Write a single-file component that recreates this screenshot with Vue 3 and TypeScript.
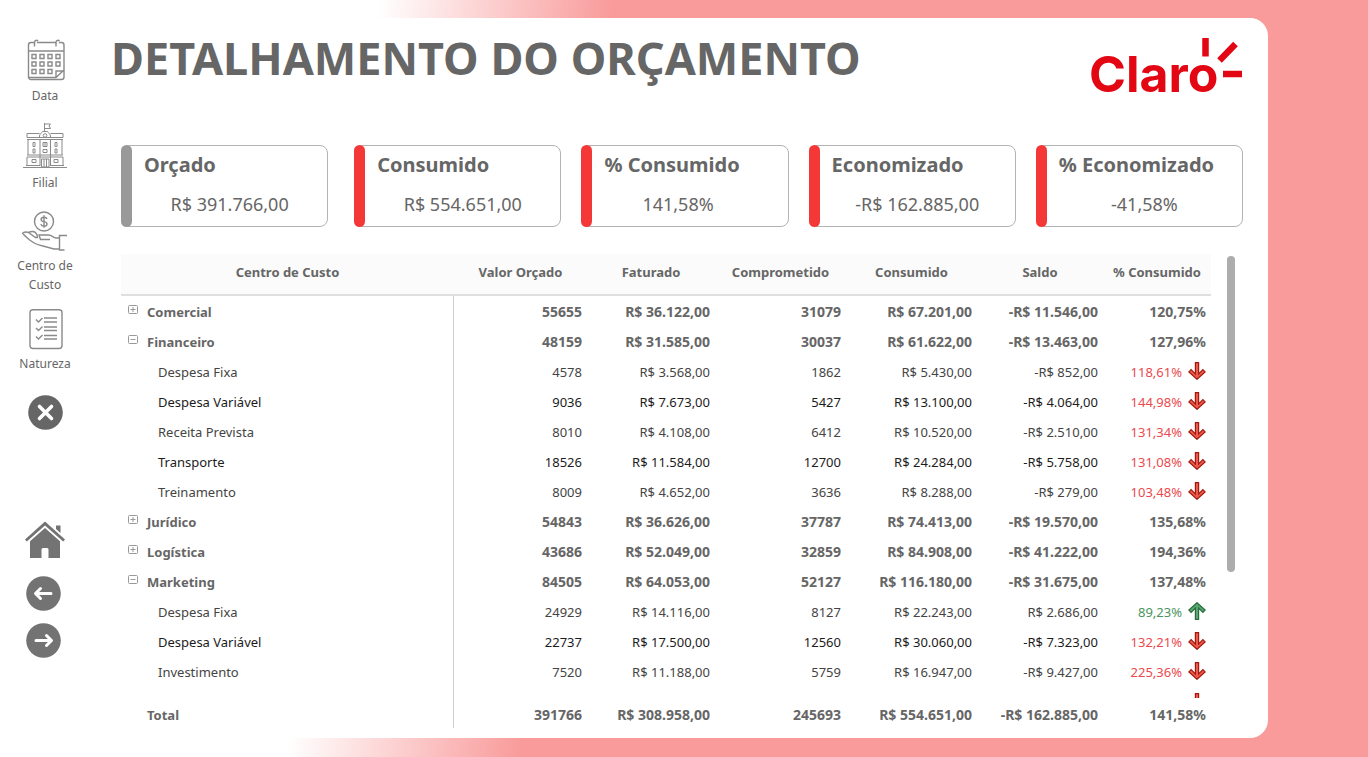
<script setup lang="ts">
interface Card {
  title: string
  value: string
  tone: 'grey' | 'red'
  percent?: boolean
}

interface Row {
  name: string
  group?: 'open' | 'closed'
  alt?: boolean
  cells: string[]
  percent: string
  trend?: 'up' | 'down'
}

const budget: Card = { title: 'Orçado', value: 'R$ 391.766,00', tone: 'grey' }

const cards: Card[] = [
  { title: 'Consumido', value: 'R$ 554.651,00', tone: 'red' },
  { title: '% Consumido', value: '141,58%', tone: 'red', percent: true },
  { title: 'Economizado', value: '-R$ 162.885,00', tone: 'red' },
  { title: '% Economizado', value: '-41,58%', tone: 'red' },
]

const columns: string[] = ['Centro de Custo', 'Valor Orçado', 'Faturado', 'Comprometido', 'Consumido', 'Saldo', '% Consumido']

const rows: Row[] = [
  { name: 'Comercial', group: 'closed', cells: ['55655', 'R$ 36.122,00', '31079', 'R$ 67.201,00', '-R$ 11.546,00'], percent: '120,75%' },
  { name: 'Financeiro', group: 'open', cells: ['48159', 'R$ 31.585,00', '30037', 'R$ 61.622,00', '-R$ 13.463,00'], percent: '127,96%' },
  { name: 'Despesa Fixa', cells: ['4578', 'R$ 3.568,00', '1862', 'R$ 5.430,00', '-R$ 852,00'], percent: '118,61%', trend: 'down' },
  { name: 'Despesa Variável', alt: true, cells: ['9036', 'R$ 7.673,00', '5427', 'R$ 13.100,00', '-R$ 4.064,00'], percent: '144,98%', trend: 'down' },
  { name: 'Receita Prevista', cells: ['8010', 'R$ 4.108,00', '6412', 'R$ 10.520,00', '-R$ 2.510,00'], percent: '131,34%', trend: 'down' },
  { name: 'Transporte', alt: true, cells: ['18526', 'R$ 11.584,00', '12700', 'R$ 24.284,00', '-R$ 5.758,00'], percent: '131,08%', trend: 'down' },
  { name: 'Treinamento', cells: ['8009', 'R$ 4.652,00', '3636', 'R$ 8.288,00', '-R$ 279,00'], percent: '103,48%', trend: 'down' },
  { name: 'Jurídico', group: 'closed', cells: ['54843', 'R$ 36.626,00', '37787', 'R$ 74.413,00', '-R$ 19.570,00'], percent: '135,68%' },
  { name: 'Logística', group: 'closed', cells: ['43686', 'R$ 52.049,00', '32859', 'R$ 84.908,00', '-R$ 41.222,00'], percent: '194,36%' },
  { name: 'Marketing', group: 'open', cells: ['84505', 'R$ 64.053,00', '52127', 'R$ 116.180,00', '-R$ 31.675,00'], percent: '137,48%' },
  { name: 'Despesa Fixa', cells: ['24929', 'R$ 14.116,00', '8127', 'R$ 22.243,00', 'R$ 2.686,00'], percent: '89,23%', trend: 'up' },
  { name: 'Despesa Variável', alt: true, cells: ['22737', 'R$ 17.500,00', '12560', 'R$ 30.060,00', '-R$ 7.323,00'], percent: '132,21%', trend: 'down' },
  { name: 'Investimento', cells: ['7520', 'R$ 11.188,00', '5759', 'R$ 16.947,00', '-R$ 9.427,00'], percent: '225,36%', trend: 'down' },
  { name: '', cells: ['', '', '', '', ''], percent: '', trend: 'down' },
]

const totals: string[] = ['391766', 'R$ 308.958,00', '245693', 'R$ 554.651,00', '-R$ 162.885,00', '141,58%']
</script>

<template>
  <div class="page">
    <nav class="side">
      <button class="filter" type="button">
        <svg width="44" height="44" viewBox="-4 0 44 44" class="line">
          <rect x="1.5" y="4.500" width="35.500" height="37" rx="2.500" />
          <path d="M1.500 13h35.500M2 39.500h27l8-7.500M29 39.500v-6.500h8" />
          <path class="gap" d="M7 4.500h3M29 4.500h3" />
          <path d="M7.500 8.500V4a2 2 0 0 1 3.500-1M29 8.500V4a2 2 0 0 1 3.500-1" />
          <path d="M5 16.500h4v4h-4zM13 16.500h4v4h-4zM21 16.500h4v4h-4zM29 16.500h4v4h-4zM5 24h4v4h-4zM13 24h4v4h-4zM21 24h4v4h-4zM29 24h4v4h-4zM5 31.500h4v4h-4zM13 31.500h4v4h-4zM21 31.500h4v4h-4z" />
        </svg>
        <span>Data</span>
      </button>
      <button class="filter" type="button">
        <svg width="46" height="50" viewBox="0 0 46 50" class="line thin">
          <path d="M22.500 12V4M22.500 5h6l-1.500 2 1.500 2.500h-6" />
          <path d="M17.500 17c0-1.500 2-3 3-4.500h5c1 1.500 3 3 3 4.500v2M17.500 19v-2" />
          <circle cx="23" cy="16.500" r="1.800" />
          <path d="M5 18.500v-4h12.500M28.500 14.500H41v4M5 18.500h36M5 20.500h36M6 20.500V36M40 20.500V36M18 20.500V47M28.500 20.500V47M5 36h36M5 38h36M5 38v9M41 38v9M1 48.500h44M4 46.500h14M28.500 46.500H42" />
          <path d="M11 23.500h2v4h-2zM11 30h2v4h-2zM33 23.500h2v4h-2zM33 30h2v4h-2zM21 23.500h4v4h-4zM23 23.500v4M21 30.500h4v3h-4zM10 40.500h4v3h-4zM32 40.500h4v3h-4zM19.500 40h7.500v8h-7.500zM22 40v8M24.500 40v8" />
        </svg>
        <span>Filial</span>
      </button>
      <button class="filter" type="button">
        <svg width="46" height="46" viewBox="0 -4 46 46" class="line">
          <circle cx="22" cy="11.500" r="9.500" />
          <path d="M25 9c-.5-1.300-1.600-1.800-3-1.800-1.700 0-2.900.8-2.900 2.200 0 1.500 1.300 1.900 2.900 2.200 1.700.3 3 .8 3 2.300s-1.300 2.200-3 2.200c-1.600 0-2.800-.6-3.200-2M22 5.300v12.400" />
          <path d="M6.500 22.500c-2-.8-4-.8-6 .8 2.500 3 5 5 7.500 7 4 3 8.500 5 13 5.700l11 3h6M38 28h-4c-3-.5-4-3-7.500-3H17l1.500 4.500H28M6.500 22.500l7 5h2c0-4-3-8-9-5M45 25.500h-7.500v14.500h5" />
        </svg>
        <span>Centro de<br />Custo</span>
      </button>
      <button class="filter" type="button">
        <svg width="38" height="42" viewBox="-2 0 38 42" class="line">
          <rect x="2" y="1.800" width="32" height="38.700" rx="3" />
          <path d="M16 10h13M16 14h13M16 19h13M16 22.500h13M16 27.500h13M16 31h13M8 11.500l2.500 2.500 4-4M8 20l2.500 2.500 4-4M8 28.500l2.500 2.500 4-4" />
        </svg>
        <span>Natureza</span>
      </button>
      <button class="icon clear" type="button" aria-label="Limpar filtros">
        <svg width="35" height="35" viewBox="0 0 35 35">
          <circle cx="17.500" cy="17.500" r="17.300" fill="#666" />
          <path d="M11.500 11.500l12 12M23.500 11.500l-12 12" stroke="#fff" stroke-width="3.600" stroke-linecap="round" />
        </svg>
      </button>
      <button class="icon home" type="button" aria-label="Início">
        <svg width="40" height="38" viewBox="0 0 40 38" fill="#737373">
          <path d="M20 .5 40 18.500l-1.800 2L20 4.500 1.800 20.500 0 18.500z" />
          <path d="M31 4.500h4.500V12L31 8z" />
          <path d="M20 7 35 20.200V37H23.500V28.500q0-1.500-1.500-1.500H18q-1.500 0-1.500 1.500V37H5V20.200z" />
        </svg>
      </button>
      <button class="icon back" type="button" aria-label="Voltar">
        <svg width="38" height="35" viewBox="0 0 38 35">
          <circle cx="17.500" cy="17.500" r="17.300" fill="#737373" />
          <path d="M25 17.500H10M14.500 12.500l-5 5 5 5" class="white" />
        </svg>
      </button>
      <button class="icon next" type="button" aria-label="Avançar">
        <svg width="38" height="35" viewBox="0 0 38 35">
          <circle cx="17.500" cy="17.500" r="17.300" fill="#737373" />
          <path d="M10 17.500h15M20.500 12.500l5 5-5 5" class="white" />
        </svg>
      </button>
    </nav>

    <main class="panel">
      <header class="top">
        <h1>DETALHAMENTO DO ORÇAMENTO</h1>
        <div class="logo">
          <span>Claro</span>
          <svg width="42" height="42" viewBox="0 0 42 42" stroke="#e30613" stroke-width="6.500">
            <path d="M4.500 0v18.500M18.500 22.500 34.500 6M22 36h19" />
          </svg>
        </div>
      </header>

      <section class="summary">
        <article class="card" :class="budget.tone">
          <h2>{{ budget.title }}</h2>
          <p>{{ budget.value }}</p>
        </article>
        <div class="rest">
          <article v-for="card in cards" :key="card.title" class="card" :class="[card.tone, { percent: card.percent }]">
            <h2>{{ card.title }}</h2>
            <p>{{ card.value }}</p>
          </article>
        </div>
      </section>

      <section class="matrix">
        <div class="viewport">
          <table>
            <colgroup>
              <col />
              <col class="w133" />
              <col class="w128" />
              <col class="w131" />
              <col class="w131" />
              <col class="w126" />
              <col class="w108" />
            </colgroup>
            <thead>
              <tr>
                <th v-for="column in columns" :key="column" scope="col">{{ column }}</th>
              </tr>
            </thead>
            <tbody>
              <tr v-for="(row, index) in rows" :key="index" :class="{ group: row.group, alt: row.alt }">
                <th scope="row">
                  <div class="name">
                    <button v-if="row.group" class="toggle" type="button" :aria-label="row.name" :aria-expanded="row.group === 'open'">
                      <svg width="10" height="10" viewBox="0 0 10 10" fill="none" stroke="#999">
                        <rect x="0.500" y="0.500" width="9" height="8" rx="1" />
                        <path :d="row.group === 'open' ? 'M2.500 4.500h5' : 'M2.500 4.500h5M5 2v5'" />
                      </svg>
                    </button>
                    <span>{{ row.name }}</span>
                  </div>
                </th>
                <td v-for="(cell, i) in row.cells" :key="i">{{ cell }}</td>
                <td>
                  <div class="result" :class="row.trend">
                    <span>{{ row.percent }}</span>
                    <svg v-if="row.trend" width="18" height="18" viewBox="0 0 18 18">
                      <path v-if="row.trend === 'down'" d="M7.400.700h3.200V12l4.300-4.300 2.200 2.200L9 17.300.900 9.900l2.200-2.200L7.400 12z" />
                      <path v-else d="M7.400 17.300h3.200V6l4.300 4.300 2.200-2.200L9 .7.900 8.100l2.200 2.200L7.400 6z" />
                    </svg>
                  </div>
                </td>
              </tr>
            </tbody>
            <tfoot>
              <tr>
                <th scope="row">Total</th>
                <td v-for="(total, i) in totals" :key="i">{{ total }}</td>
              </tr>
            </tfoot>
          </table>
        </div>
        <div class="scrollbar"></div>
      </section>
    </main>
  </div>
</template>

<style>
body {
  margin: 0;
}
</style>

<style scoped>
.page {
  display: flex;
  box-sizing: border-box;
  height: 100vh;
  min-height: 757px;
  padding: 18px 100px 19px 0;
  background: linear-gradient(97deg, #fff 376px, #f99b9b 608px);
  font-family: 'Noto Sans', 'Open Sans', sans-serif;
  color: #666;
}

button {
  padding: 0;
  border: 0;
  background: none;
  font: inherit;
  color: inherit;
  cursor: pointer;
}

svg {
  display: block;
}

.side {
  flex: 0 0 90px;
  display: flex;
  flex-direction: column;
  align-items: center;
  padding-top: 20px;
}

.filter {
  display: flex;
  flex-direction: column;
  align-items: center;
  gap: 4px;
  margin-bottom: 14px;
  font-size: 12px;
  line-height: 19px;
}

.line {
  fill: none;
  stroke: #8a8a8a;
  stroke-width: 1.4;
}

.thin {
  stroke-width: 1;
}

.gap {
  stroke: #fff;
  stroke-width: 2;
}

.white {
  fill: none;
  stroke: #fff;
  stroke-width: 3;
  stroke-linecap: round;
  stroke-linejoin: round;
}

.clear {
  margin-top: 8px;
}

.home {
  margin-top: 91px;
}

.back {
  margin-top: 17px;
}

.next {
  margin-top: 12px;
}

.panel {
  flex: 1;
  min-width: 0;
  display: flex;
  flex-direction: column;
  box-sizing: border-box;
  padding: 0 25px 10px 31px;
  border-radius: 0 18px 18px 0;
  background: #fff;
}

.top {
  display: flex;
  justify-content: space-between;
  height: 127px;
  margin-left: -10px;
}

h1 {
  margin: 8px 0 0;
  font-size: 45px;
  line-height: 64px;
  font-weight: 700;
  white-space: nowrap;
}

.logo {
  position: relative;
  width: 154px;
  margin-top: 26px;
  font: 700 50px/60px Inter, sans-serif;
  color: #e30613;
}

.logo svg {
  position: absolute;
  top: -6px;
  right: 0;
}

.summary {
  display: flex;
  gap: 26px;
}

.rest {
  flex: 4 4 156px;
  display: flex;
  gap: 20px;
}

.card {
  position: relative;
  flex: 1 1 24px;
  box-sizing: border-box;
  height: 82px;
  padding: 4px 0 0 22px;
  border: 1px solid #b3b3b3;
  border-radius: 8px;
}

.card::before {
  content: '';
  position: absolute;
  top: -1px;
  bottom: -1px;
  left: -1px;
  width: 11px;
  border-radius: 6px;
  background: #f43838;
}

.card.grey::before {
  background: #999;
}

.card h2 {
  margin: 0;
  font-size: 20px;
  line-height: 30px;
  font-weight: 700;
  white-space: nowrap;
}

.card p {
  margin: 8px 12px 0 0;
  font-size: 18px;
  line-height: 32px;
  text-align: center;
  white-space: nowrap;
}

.percent p {
  margin-right: 36px;
}

.matrix {
  flex: 1;
  min-height: 0;
  display: flex;
  gap: 16px;
  padding: 27px 8px 0 0;
}

.viewport {
  flex: 1;
  min-width: 0;
  overflow: hidden;
}

.scrollbar {
  width: 8px;
  height: 316px;
  margin-top: 2px;
  border-radius: 4px;
  background: #adadab;
}

table {
  width: 100%;
  table-layout: fixed;
  border-collapse: separate;
  border-spacing: 0;
  font-size: 13px;
}

.w133 { width: 133px; }
.w128 { width: 128px; }
.w131 { width: 131px; }
.w126 { width: 126px; }
.w108 { width: 108px; }

th,
td {
  box-sizing: border-box;
  height: 30px;
  padding: 2px 5px 0 0;
  line-height: 18px;
  text-align: right;
  white-space: nowrap;
}

thead th {
  position: sticky;
  top: 0;
  height: 42px;
  padding: 0 0 4px;
  border-bottom: 2px solid #dfdfdf;
  background: #fbfbfb;
  text-align: center;
}

tbody {
  color: #444;
}

tbody th {
  padding-left: 37px;
  border-right: 1px solid #d0d0d0;
  font-weight: 400;
  text-align: left;
}

.alt {
  color: #1c1c1c;
}

.group {
  color: #666;
}

.group th {
  padding-left: 7px;
}

.group th,
.group td {
  font-weight: 700;
}

.group td,
tfoot td {
  font-size: 14px;
}

.name {
  display: flex;
  gap: 9px;
}

.toggle {
  width: 10px;
  height: 10px;
  margin-top: 2px;
}

.result {
  display: flex;
  justify-content: flex-end;
  gap: 6px;
}

.result svg {
  margin-top: -1px;
}

.down {
  color: #ea4a4e;
}

.up {
  color: #4b9460;
}

.result path {
  fill: #ee5a4a;
  stroke: #a3190f;
  stroke-width: 1.2;
}

.up path {
  fill: #57a86e;
  stroke: #2a6b3d;
}

tfoot th,
tfoot td {
  position: sticky;
  bottom: 0;
  padding-top: 4px;
  background: #fff;
  font-weight: 700;
}

tfoot th {
  padding-left: 26px;
  border-right: 1px solid #d0d0d0;
  text-align: left;
}
</style>
